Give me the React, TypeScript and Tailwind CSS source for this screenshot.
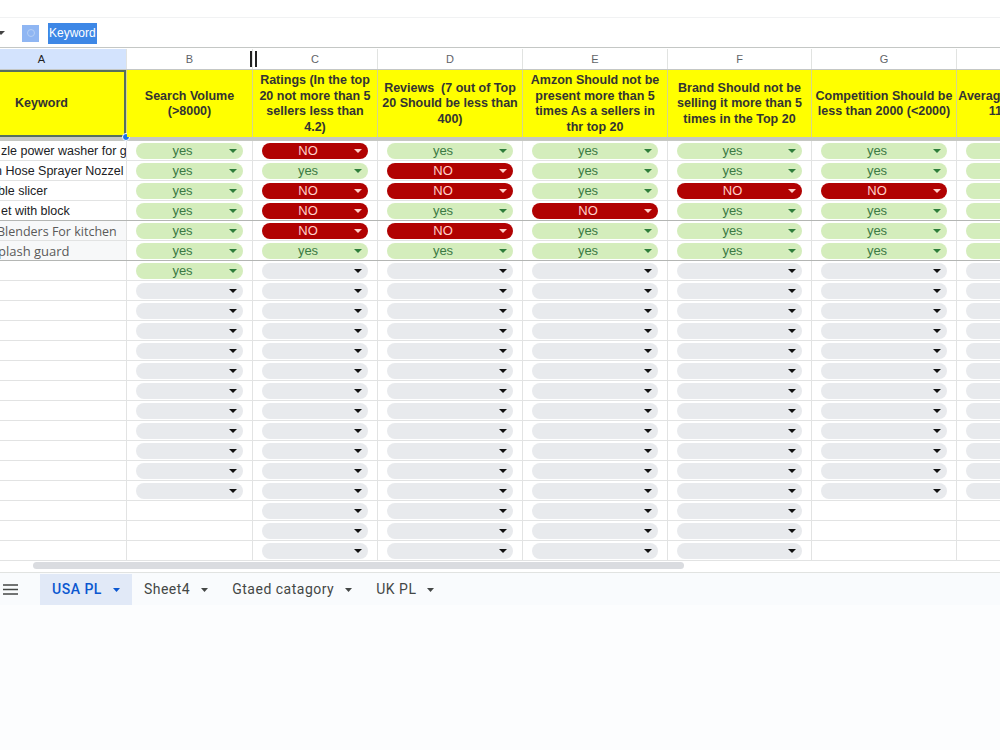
import React from 'react'

type Val = 'Y' | 'N' | '-' | ''

// widths of columns A..H, A is scrolled partly out of view
const cols = 'grid w-[1145px] grid-cols-[170px_126px_125px_145px_145px_144px_145px_145px]'

const letters = ['A', 'B', 'C', 'D', 'E', 'F', 'G', 'H']

const headers: string[][] = [
    ['Keyword'],
    ['Search Volume', '(>8000)'],
    ['Ratings (In the top', '20 not more than 5', 'sellers less than', '4.2)'],
    ['Reviews  (7 out of Top', '20 Should be less than', '400)'],
    ['Amzon Should not be', 'present more than 5', 'times As a sellers in', 'thr top 20'],
    ['Brand Should not be', 'selling it more than 5', 'times in the Top 20'],
    ['Competition Should be', 'less than 2000 (<2000)'],
    ['Average Selling Price is', '11$ to 50$ US'],
]

const keywords = [
    { text: 'zle power washer for garden', cls: 'pl-[44px] font-["Liberation_Sans",Arial,sans-serif] text-[12.5px] text-[#202124]' },
    { text: 'n Hose Sprayer Nozzel', cls: 'pl-[38px] font-["Liberation_Sans",Arial,sans-serif] text-[12.5px] text-[#202124]' },
    { text: 'ble slicer', cls: 'pl-[41px] font-["Liberation_Sans",Arial,sans-serif] text-[12.5px] text-[#202124]' },
    { text: 'et with block', cls: 'pl-[44px] font-["Liberation_Sans",Arial,sans-serif] text-[12.5px] text-[#202124]' },
    { text: 'Blenders For kitchen', cls: 'pl-[40px] font-["Open_Sans",sans-serif] text-[12.5px] text-[#5a5a5a] bg-[#f7f8f9]' },
    { text: 'plash guard', cls: 'pl-[41px] font-["Open_Sans",sans-serif] text-[13px] text-[#5a5a5a] bg-[#f7f8f9]' },
]

const blank: Val[] = ['-', '-', '-', '-', '-', '-', '-']
const tail: Val[] = ['', '-', '-', '-', '-', '', '']

const data: Val[][] = [
    ['Y', 'N', 'Y', 'Y', 'Y', 'Y', 'Y'],
    ['Y', 'Y', 'N', 'Y', 'Y', 'Y', 'Y'],
    ['Y', 'N', 'N', 'Y', 'N', 'N', 'Y'],
    ['Y', 'N', 'Y', 'N', 'Y', 'Y', 'Y'],
    ['Y', 'N', 'N', 'Y', 'Y', 'Y', 'Y'],
    ['Y', 'Y', 'Y', 'Y', 'Y', 'Y', 'Y'],
    ['Y', '-', '-', '-', '-', '-', '-'],
    ...Array.from({ length: 11 }, () => blank),
    tail,
    tail,
    tail,
]

const Caret = ({ color }: { color: string }) => (
    <svg width="8" height="4" viewBox="0 0 8 4" className="shrink-0">
        <path d="M0 0h8L4 4z" fill={color} />
    </svg>
)

const Chip = ({ v }: { v: Val }) => {
    if (v === '') return null
    const look =
        v === 'Y'
            ? { box: 'bg-[#d4edbc] text-[#3b7a44]', arrow: '#2e7d3a', label: 'yes' }
            : v === 'N'
              ? { box: 'bg-[#b10202] text-[#ffcfc9]', arrow: '#ffcfc9', label: 'NO' }
              : { box: 'bg-[#e8eaed] text-black', arrow: '#111', label: '' }
    return (
        <div className={`flex h-[16px] w-full items-center rounded-full pr-[6px] ${look.box}`}>
            <span className="flex-1 text-center text-[13px] leading-[16px]">{look.label}</span>
            <Caret color={look.arrow} />
        </div>
    )
}

const Tab = ({ name, active }: { name: string; active?: boolean }) => (
    <div
        className={`flex h-full items-center gap-[11px] px-[12px] text-[14px] tracking-[0.5px] ${
            active ? 'bg-[#e1e9f7] font-medium text-[#0b57d0]' : 'text-[#444746]'
        }`}
    >
        <span>{name}</span>
        <svg width="7" height="4" viewBox="0 0 7 4">
            <path d="M0 0h7L3.5 4z" fill={active ? '#0b57d0' : '#444746'} />
        </svg>
    </div>
)

export default function App() {
    return (
        <div className="h-[750px] w-[1000px] overflow-hidden bg-white font-['Liberation_Sans',Arial,sans-serif]">
            <div className="h-[18px] border-b border-[#f1f2f3]" />

            {/* name box / formula bar */}
            <div className="flex h-[30px] items-center border-b border-[#c4c7c5] pt-[1px]">
                <svg width="5" height="4" viewBox="0 0 5 4">
                    <path d="M-3 0h8L1 4z" fill="#444" />
                </svg>
                <div className="ml-[17px] flex h-[17px] w-[17px] items-center justify-center bg-[#8fb6f3]">
                    <div className="h-[8px] w-[8px] rounded-full border border-[#b5cff5]" />
                </div>
                <div className="ml-[9px] flex h-[21px] items-center bg-[#3d87e6] px-[1px] text-[12px] text-white">
                    Keyword
                </div>
            </div>

            <div className="h-[514px] overflow-hidden">
                <div className="ml-[-43px]">
                    {/* column letters */}
                    <div className={`${cols} h-[22px] border-b border-[#c4c7c5] pt-[1px]`}>
                        {letters.map((l, i) => (
                            <div
                                key={l}
                                className={`relative flex items-center justify-center border-r border-[#e1e3e1] text-[11px] ${
                                    i === 0 ? 'bg-[#d3e3fd] font-medium text-[#1f1f1f]' : 'text-[#5f6368]'
                                }`}
                            >
                                {l}
                                {i === 1 && (
                                    <div className="absolute right-[-5px] top-[2px] flex gap-[3px]">
                                        <div className="h-[16px] w-[2px] bg-[#222]" />
                                        <div className="h-[16px] w-[2px] bg-[#222]" />
                                    </div>
                                )}
                            </div>
                        ))}
                    </div>

                    {/* frozen header row */}
                    <div className={`${cols} relative z-10 h-[67px]`}>
                        {headers.map((lines, i) => (
                            <div
                                key={i}
                                className="relative flex flex-col items-center justify-center border-r border-[#d6d68e] bg-[#ffff00] pt-[1px] text-[12.5px] font-bold leading-[15.5px] whitespace-pre text-[#333]"
                            >
                                {lines.map((t) => (
                                    <span key={t}>{t}</span>
                                ))}
                                {i === 0 && (
                                    <>
                                        <div className="absolute inset-0 border-2 border-[#56705e]" />
                                        <div className="absolute bottom-[-4px] right-[-4px] h-[8px] w-[8px] rounded-full border border-white bg-[#1a73e8]" />
                                    </>
                                )}
                            </div>
                        ))}
                    </div>
                    <div className="h-[4px] w-[1145px] bg-[#c6c8c3]" />

                    {/* data rows */}
                    {data.map((row, r) => (
                        <div
                            key={r}
                            className={`${cols} h-[20px] border-b ${
                                r === 3 || r === 5 ? 'border-[#b4b6b4]' : 'border-[#e2e3e3]'
                            }`}
                        >
                            <div
                                className={`overflow-hidden whitespace-nowrap border-r border-[#e2e3e3] pt-[1px] leading-[19px] ${
                                    keywords[r]?.cls ?? ''
                                }`}
                            >
                                {keywords[r]?.text}
                            </div>
                            {row.map((v, c) => (
                                <div key={c} className="flex items-center border-r border-[#e2e3e3] px-[9px] pt-[1px]">
                                    <Chip v={v} />
                                </div>
                            ))}
                        </div>
                    ))}
                </div>
            </div>

            {/* horizontal scrollbar */}
            <div className="h-[11px] border-b border-[#e1e3e1] pl-[33px]">
                <div className="h-[7px] w-[651px] rounded-full bg-[#dadce0]" />
            </div>

            {/* sheet tabs */}
            <div className="flex h-[32px] items-center bg-[#f9fbfd] pt-[1px] font-['Roboto',sans-serif]">
                <svg width="15" height="11" viewBox="0 0 15 11" className="ml-[3px] mr-[22px]">
                    <path d="M0 1h15M0 5.5h15M0 10h15" stroke="#444746" strokeWidth="1.6" />
                </svg>
                <Tab name="USA PL" active />
                <Tab name="Sheet4" />
                <Tab name="Gtaed catagory" />
                <Tab name="UK PL" />
            </div>
            <div className="h-full bg-[#fcfdfe]" />
        </div>
    )
}
